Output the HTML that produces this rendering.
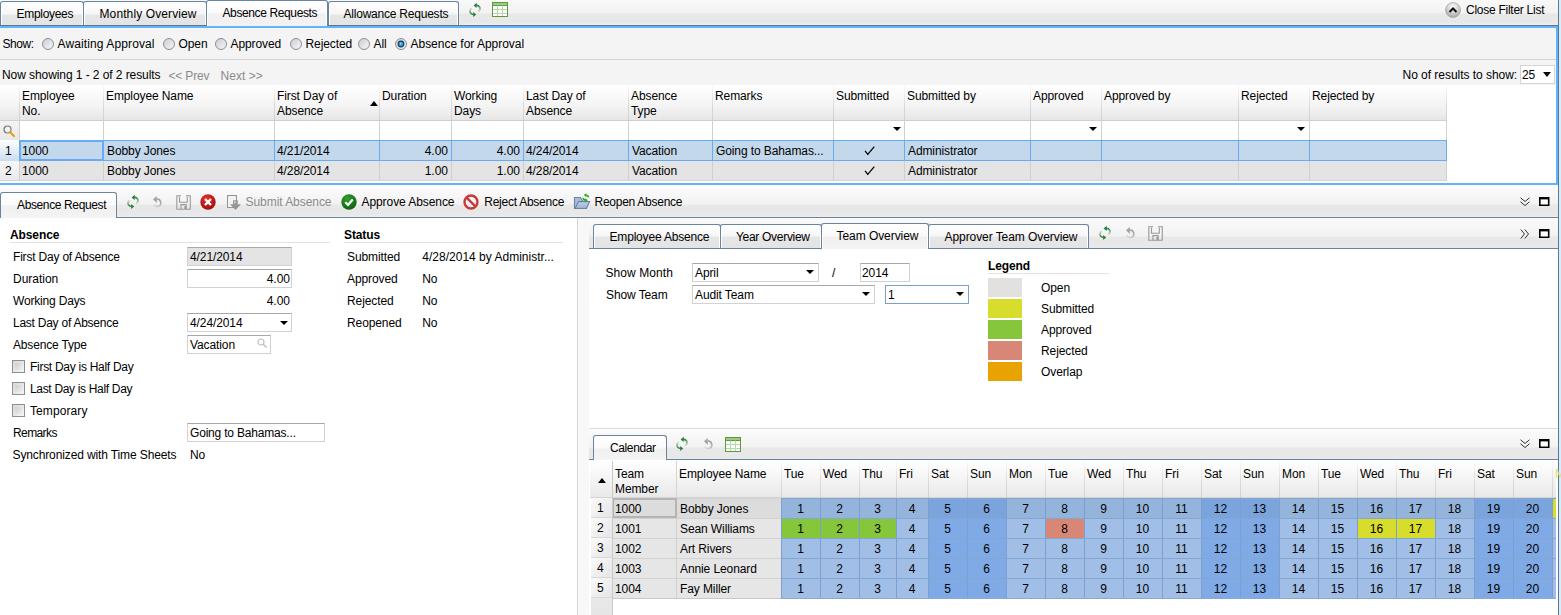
<!DOCTYPE html><html><head><meta charset='utf-8'><style>
*{margin:0;padding:0;box-sizing:border-box}
html,body{width:1561px;height:615px;overflow:hidden;background:#fff;position:relative}
.t{position:absolute;font:12px/14px 'Liberation Sans', sans-serif;color:#000;white-space:nowrap}
.bd{font-weight:bold}
.g{color:#8a8a8a}
.b{position:absolute}
svg{position:absolute;overflow:visible}
</style></head><body>
<div class="b" style="left:0px;top:0px;width:1558px;height:25px;background:linear-gradient(#f9f9f9 0px,#f2f2f2 13px,#e8e8e8 14px,#e8e8e8 23px,#f0eeec 24px)"></div>
<div class="b" style="left:0px;top:25px;width:1558px;height:1px;background:#5a7896"></div>
<div class="b" style="left:0px;top:26px;width:1556px;height:2px;background:#62b2fc"></div>
<div class="b" style="left:0px;top:1px;width:84px;height:24px;border:1px solid #6884a2;border-bottom:none;border-radius:3px 3px 0 0;background:linear-gradient(#ffffff 0px,#f6f6f6 12px,#e6e6e6 13px,#e4e4e4 100%);box-shadow:inset 1px 1px 0 #fff,inset -1px 0 0 #fff"></div>
<div class="t " style="left:16.5px;top:7px;letter-spacing:-0.295px;">Employees</div>
<div class="b" style="left:83px;top:1px;width:124px;height:24px;border:1px solid #6884a2;border-bottom:none;border-radius:3px 3px 0 0;background:linear-gradient(#ffffff 0px,#f6f6f6 12px,#e6e6e6 13px,#e4e4e4 100%);box-shadow:inset 1px 1px 0 #fff,inset -1px 0 0 #fff"></div>
<div class="t " style="left:99.5px;top:7px;letter-spacing:0.109px;">Monthly Overview</div>
<div class="b" style="left:328px;top:1px;width:131px;height:24px;border:1px solid #6884a2;border-bottom:none;border-radius:3px 3px 0 0;background:linear-gradient(#ffffff 0px,#f6f6f6 12px,#e6e6e6 13px,#e4e4e4 100%);box-shadow:inset 1px 1px 0 #fff,inset -1px 0 0 #fff"></div>
<div class="t " style="left:343.5px;top:7px;letter-spacing:-0.219px;">Allowance Requests</div>
<div class="b" style="left:206px;top:0px;width:122px;height:26px;border:1px solid #6884a2;border-bottom:none;border-radius:3px 3px 0 0;background:linear-gradient(#ffffff 0px,#fafafa 12px,#f0f0f0 13px,#f2f2f2 100%);box-shadow:inset 1px 1px 0 #fff,inset -1px 0 0 #fff"></div>
<div class="t " style="left:222.5px;top:6px;letter-spacing:-0.382px;">Absence Requests</div>
<svg style="left:469px;top:3px" width="12" height="14" viewBox="0 0 12 14">
<defs><linearGradient id="ru1" gradientUnits="userSpaceOnUse" x1="8" y1="2" x2="9" y2="9"><stop offset="0" stop-color="#2e7d3c"/><stop offset="1" stop-color="#2e7d3c" stop-opacity="0.15"/></linearGradient>
<linearGradient id="rl1" gradientUnits="userSpaceOnUse" x1="4" y1="11.5" x2="3" y2="5"><stop offset="0" stop-color="#2e7d3c"/><stop offset="1" stop-color="#2e7d3c" stop-opacity="0.15"/></linearGradient></defs>
<path d="M7 2.4 C10 2.4 11.2 4.2 11 6.2 C10.8 7.6 10 8.3 9 8.6" fill="none" stroke="url(#ru1)" stroke-width="1.8"/>
<path d="M5 11.4 C2 11.4 0.8 9.6 1 7.6 C1.2 6.2 2 5.5 3 5.2" fill="none" stroke="url(#rl1)" stroke-width="1.8"/>
<path d="M4.6 2.4 L7.8 -0.2 L7.6 5 Z" fill="#2e7d3c"/>
<path d="M7.2 11.4 L4.2 8.9 L4.2 14 Z" fill="#2e7d3c"/>
</svg>
<svg style="left:492px;top:2px" width="17" height="16" viewBox="0 0 17 16">
<rect x="0.5" y="0.5" width="15" height="14" fill="#fff" stroke="#5a9a3a" stroke-width="1"/>
<rect x="1" y="1" width="14" height="2" fill="#9ccc84"/>
<path d="M1 3.5H15" stroke="#5a9a3a" stroke-width="1"/>
<path d="M1 7.5H15M1 11.5H15M5.5 3.5V14M10.5 3.5V14" stroke="#b8d8a8" stroke-width="1"/>
</svg>
<svg style="left:1445px;top:2px" width="16" height="16" viewBox="0 0 16 16">
<defs><radialGradient id="cg" cx="0.5" cy="0.3" r="0.7"><stop offset="0" stop-color="#ffffff"/><stop offset="1" stop-color="#a8a8a8"/></radialGradient></defs>
<circle cx="8" cy="8" r="7.5" fill="url(#cg)" stroke="#9a9a9a" stroke-width="0.6"/>
<path d="M4.5 10 L8 6.5 L11.5 10" fill="none" stroke="#111" stroke-width="2"/>
</svg>
<div class="t " style="left:1466px;top:3px;letter-spacing:-0.262px;">Close Filter List</div>
<div class="b" style="left:1558px;top:0px;width:1px;height:615px;background:#5a7896"></div>
<div class="b" style="left:1559px;top:0px;width:2px;height:615px;background:#d4eefa"></div>
<div class="b" style="left:0px;top:28px;width:1556px;height:155px;background:#f4f4f4"></div>
<div class="b" style="left:1556px;top:26px;width:2px;height:159px;background:#62b2fc"></div>
<div class="b" style="left:0px;top:183px;width:1556px;height:2px;background:#62b2fc"></div>
<div class="t " style="left:2.5px;top:37px;letter-spacing:-0.438px;">Show:</div>
<svg style="left:42px;top:38px" width="12" height="12" viewBox="0 0 12 12">
<defs><linearGradient id="rg42" x1="0" y1="0" x2="1" y2="1"><stop offset="0" stop-color="#c8ccd4"/><stop offset="1" stop-color="#f8f8f8"/></linearGradient></defs>
<circle cx="6" cy="6" r="5.5" fill="url(#rg42)" stroke="#8e8f8f" stroke-width="1"/>
</svg>
<div class="t " style="left:57.5px;top:37px;letter-spacing:0.114px;">Awaiting Approval</div>
<svg style="left:163px;top:38px" width="12" height="12" viewBox="0 0 12 12">
<defs><linearGradient id="rg163" x1="0" y1="0" x2="1" y2="1"><stop offset="0" stop-color="#c8ccd4"/><stop offset="1" stop-color="#f8f8f8"/></linearGradient></defs>
<circle cx="6" cy="6" r="5.5" fill="url(#rg163)" stroke="#8e8f8f" stroke-width="1"/>
</svg>
<div class="t " style="left:178.5px;top:37px;letter-spacing:-0.1px;">Open</div>
<svg style="left:215px;top:38px" width="12" height="12" viewBox="0 0 12 12">
<defs><linearGradient id="rg215" x1="0" y1="0" x2="1" y2="1"><stop offset="0" stop-color="#c8ccd4"/><stop offset="1" stop-color="#f8f8f8"/></linearGradient></defs>
<circle cx="6" cy="6" r="5.5" fill="url(#rg215)" stroke="#8e8f8f" stroke-width="1"/>
</svg>
<div class="t " style="left:230.5px;top:37px;letter-spacing:-0.1px;">Approved</div>
<svg style="left:290px;top:38px" width="12" height="12" viewBox="0 0 12 12">
<defs><linearGradient id="rg290" x1="0" y1="0" x2="1" y2="1"><stop offset="0" stop-color="#c8ccd4"/><stop offset="1" stop-color="#f8f8f8"/></linearGradient></defs>
<circle cx="6" cy="6" r="5.5" fill="url(#rg290)" stroke="#8e8f8f" stroke-width="1"/>
</svg>
<div class="t " style="left:305.5px;top:37px;letter-spacing:-0.1px;">Rejected</div>
<svg style="left:358px;top:38px" width="12" height="12" viewBox="0 0 12 12">
<defs><linearGradient id="rg358" x1="0" y1="0" x2="1" y2="1"><stop offset="0" stop-color="#c8ccd4"/><stop offset="1" stop-color="#f8f8f8"/></linearGradient></defs>
<circle cx="6" cy="6" r="5.5" fill="url(#rg358)" stroke="#8e8f8f" stroke-width="1"/>
</svg>
<div class="t " style="left:373.5px;top:37px;letter-spacing:-0.1px;">All</div>
<svg style="left:395px;top:38px" width="12" height="12" viewBox="0 0 12 12">
<defs><linearGradient id="rg395" x1="0" y1="0" x2="1" y2="1"><stop offset="0" stop-color="#c8ccd4"/><stop offset="1" stop-color="#f8f8f8"/></linearGradient></defs>
<circle cx="6" cy="6" r="5.5" fill="url(#rg395)" stroke="#8e8f8f" stroke-width="1"/><circle cx="6" cy="6" r="3.4" fill="#163c5e"/><circle cx="6" cy="6" r="2.2" fill="#2f9ee0"/><circle cx="5.6" cy="5.5" r="1" fill="#8fd4ff"/>
</svg>
<div class="t " style="left:410.5px;top:37px;letter-spacing:-0.025px;">Absence for Approval</div>
<div class="b" style="left:0px;top:59px;width:1556px;height:1px;background:#d2d2d2"></div>
<div class="t " style="left:2px;top:68px;letter-spacing:-0.077px;">Now showing 1 - 2 of 2 results</div>
<div class="t g" style="left:168.5px;top:69px;letter-spacing:-0.171px;">&lt;&lt; Prev</div>
<div class="t g" style="left:220.5px;top:69px;letter-spacing:0.046px;">Next &gt;&gt;</div>
<div class="t " style="left:1402.5px;top:68px;letter-spacing:-0.033px;">No of results to show:</div>
<div class="b" style="left:1520px;top:65px;width:35px;height:19px;background:#fff;border:1px solid #d4d4d4"></div>
<div class="t " style="left:1522px;top:68px;letter-spacing:-0.1px;">25</div>
<svg style="left:1543px;top:72px" width="8" height="5" viewBox="0 0 8 5"><path d="M0 0H8L4.0 5Z" fill="#000"/></svg>
<div class="b" style="left:0px;top:85px;width:1447px;height:35px;background:linear-gradient(#ffffff,#f4f4f4 60%,#e6e6e6)"></div>
<div class="b" style="left:1447px;top:85px;width:109px;height:98px;background:#fff"></div>
<div class="b" style="left:0px;top:120px;width:1447px;height:1px;background:#d0d0d0"></div>
<div class="b" style="left:19px;top:121px;width:1428px;height:19px;background:#fff"></div>
<div class="b" style="left:0px;top:121px;width:19px;height:19px;background:linear-gradient(#f4f4f4,#e8e8e8)"></div>
<div class="b" style="left:0px;top:140px;width:19px;height:21px;background:linear-gradient(#ffffff,#c8dcf0)"></div>
<div class="b" style="left:19px;top:140px;width:1428px;height:21px;background:#c4d8ec"></div>
<div class="b" style="left:0px;top:161px;width:19px;height:20px;background:linear-gradient(#f8f8f8,#e8e8e8)"></div>
<div class="b" style="left:19px;top:161px;width:1428px;height:20px;background:#e4e4e4"></div>
<div class="b" style="left:0px;top:180px;width:1447px;height:1px;background:#d4d4d4"></div>
<div class="b" style="left:0px;top:181px;width:1556px;height:2px;background:#fff"></div>
<div class="b" style="left:19px;top:85px;width:1px;height:35px;background:linear-gradient(#fafafa,#d8d8d8 60%,#d0d0d0)"></div>
<div class="b" style="left:19px;top:121px;width:1px;height:60px;background:#d0d0d0"></div>
<div class="b" style="left:103px;top:85px;width:1px;height:35px;background:linear-gradient(#fafafa,#d8d8d8 60%,#d0d0d0)"></div>
<div class="b" style="left:103px;top:121px;width:1px;height:60px;background:#d0d0d0"></div>
<div class="b" style="left:274px;top:85px;width:1px;height:35px;background:linear-gradient(#fafafa,#d8d8d8 60%,#d0d0d0)"></div>
<div class="b" style="left:274px;top:121px;width:1px;height:60px;background:#d0d0d0"></div>
<div class="b" style="left:379px;top:85px;width:1px;height:35px;background:linear-gradient(#fafafa,#d8d8d8 60%,#d0d0d0)"></div>
<div class="b" style="left:379px;top:121px;width:1px;height:60px;background:#d0d0d0"></div>
<div class="b" style="left:451px;top:85px;width:1px;height:35px;background:linear-gradient(#fafafa,#d8d8d8 60%,#d0d0d0)"></div>
<div class="b" style="left:451px;top:121px;width:1px;height:60px;background:#d0d0d0"></div>
<div class="b" style="left:523px;top:85px;width:1px;height:35px;background:linear-gradient(#fafafa,#d8d8d8 60%,#d0d0d0)"></div>
<div class="b" style="left:523px;top:121px;width:1px;height:60px;background:#d0d0d0"></div>
<div class="b" style="left:628px;top:85px;width:1px;height:35px;background:linear-gradient(#fafafa,#d8d8d8 60%,#d0d0d0)"></div>
<div class="b" style="left:628px;top:121px;width:1px;height:60px;background:#d0d0d0"></div>
<div class="b" style="left:712px;top:85px;width:1px;height:35px;background:linear-gradient(#fafafa,#d8d8d8 60%,#d0d0d0)"></div>
<div class="b" style="left:712px;top:121px;width:1px;height:60px;background:#d0d0d0"></div>
<div class="b" style="left:833px;top:85px;width:1px;height:35px;background:linear-gradient(#fafafa,#d8d8d8 60%,#d0d0d0)"></div>
<div class="b" style="left:833px;top:121px;width:1px;height:60px;background:#d0d0d0"></div>
<div class="b" style="left:904px;top:85px;width:1px;height:35px;background:linear-gradient(#fafafa,#d8d8d8 60%,#d0d0d0)"></div>
<div class="b" style="left:904px;top:121px;width:1px;height:60px;background:#d0d0d0"></div>
<div class="b" style="left:1030px;top:85px;width:1px;height:35px;background:linear-gradient(#fafafa,#d8d8d8 60%,#d0d0d0)"></div>
<div class="b" style="left:1030px;top:121px;width:1px;height:60px;background:#d0d0d0"></div>
<div class="b" style="left:1101px;top:85px;width:1px;height:35px;background:linear-gradient(#fafafa,#d8d8d8 60%,#d0d0d0)"></div>
<div class="b" style="left:1101px;top:121px;width:1px;height:60px;background:#d0d0d0"></div>
<div class="b" style="left:1238px;top:85px;width:1px;height:35px;background:linear-gradient(#fafafa,#d8d8d8 60%,#d0d0d0)"></div>
<div class="b" style="left:1238px;top:121px;width:1px;height:60px;background:#d0d0d0"></div>
<div class="b" style="left:1309px;top:85px;width:1px;height:35px;background:linear-gradient(#fafafa,#d8d8d8 60%,#d0d0d0)"></div>
<div class="b" style="left:1309px;top:121px;width:1px;height:60px;background:#d0d0d0"></div>
<div class="b" style="left:1446px;top:85px;width:1px;height:35px;background:linear-gradient(#fafafa,#d8d8d8 60%,#d0d0d0)"></div>
<div class="b" style="left:1446px;top:121px;width:1px;height:60px;background:#d0d0d0"></div>
<div class="b" style="left:19px;top:140px;width:1428px;height:1px;background:#64acf4"></div>
<div class="b" style="left:19px;top:160px;width:1428px;height:1px;background:#64acf4"></div>
<div class="b" style="left:103px;top:140px;width:1px;height:21px;background:#64acf4"></div>
<div class="b" style="left:274px;top:140px;width:1px;height:21px;background:#64acf4"></div>
<div class="b" style="left:379px;top:140px;width:1px;height:21px;background:#64acf4"></div>
<div class="b" style="left:451px;top:140px;width:1px;height:21px;background:#64acf4"></div>
<div class="b" style="left:523px;top:140px;width:1px;height:21px;background:#64acf4"></div>
<div class="b" style="left:628px;top:140px;width:1px;height:21px;background:#64acf4"></div>
<div class="b" style="left:712px;top:140px;width:1px;height:21px;background:#64acf4"></div>
<div class="b" style="left:833px;top:140px;width:1px;height:21px;background:#64acf4"></div>
<div class="b" style="left:904px;top:140px;width:1px;height:21px;background:#64acf4"></div>
<div class="b" style="left:1030px;top:140px;width:1px;height:21px;background:#64acf4"></div>
<div class="b" style="left:1101px;top:140px;width:1px;height:21px;background:#64acf4"></div>
<div class="b" style="left:1238px;top:140px;width:1px;height:21px;background:#64acf4"></div>
<div class="b" style="left:1309px;top:140px;width:1px;height:21px;background:#64acf4"></div>
<div class="b" style="left:1446px;top:140px;width:1px;height:21px;background:#64acf4"></div>
<div class="b" style="left:19px;top:140px;width:85px;height:21px;border:2px solid #64acf4"></div>
<div class="t " style="left:22px;top:89px;letter-spacing:-0.1px;">Employee</div>
<div class="t " style="left:22px;top:104px;letter-spacing:-0.1px;">No.</div>
<div class="t " style="left:106px;top:89px;letter-spacing:-0.1px;">Employee Name</div>
<div class="t " style="left:277px;top:89px;letter-spacing:-0.1px;">First Day of</div>
<div class="t " style="left:277px;top:104px;letter-spacing:-0.1px;">Absence</div>
<div class="t " style="left:382px;top:89px;letter-spacing:-0.1px;">Duration</div>
<div class="t " style="left:454px;top:89px;letter-spacing:-0.1px;">Working</div>
<div class="t " style="left:454px;top:104px;letter-spacing:-0.1px;">Days</div>
<div class="t " style="left:526px;top:89px;letter-spacing:-0.1px;">Last Day of</div>
<div class="t " style="left:526px;top:104px;letter-spacing:-0.1px;">Absence</div>
<div class="t " style="left:631px;top:89px;letter-spacing:-0.1px;">Absence</div>
<div class="t " style="left:631px;top:104px;letter-spacing:-0.1px;">Type</div>
<div class="t " style="left:715px;top:89px;letter-spacing:-0.1px;">Remarks</div>
<div class="t " style="left:836px;top:89px;letter-spacing:-0.1px;">Submitted</div>
<div class="t " style="left:907px;top:89px;letter-spacing:-0.1px;">Submitted by</div>
<div class="t " style="left:1033px;top:89px;letter-spacing:-0.1px;">Approved</div>
<div class="t " style="left:1104px;top:89px;letter-spacing:-0.1px;">Approved by</div>
<div class="t " style="left:1241px;top:89px;letter-spacing:-0.1px;">Rejected</div>
<div class="t " style="left:1312px;top:89px;letter-spacing:-0.1px;">Rejected by</div>
<svg style="left:370px;top:101px" width="8" height="5" viewBox="0 0 8 5"><path d="M0 5H8L4.0 0Z" fill="#000"/></svg>
<svg style="left:3px;top:125px" width="12" height="12" viewBox="0 0 12 12">
<circle cx="4.5" cy="4.5" r="3.5" fill="#f4f4f4" stroke="#777" stroke-width="1.2"/>
<path d="M7 7 L11 11" stroke="#e0a020" stroke-width="2.2" stroke-linecap="round"/>
</svg>
<svg style="left:893px;top:127px" width="8" height="4" viewBox="0 0 8 4"><path d="M0 0H8L4.0 4Z" fill="#000"/></svg>
<svg style="left:1089px;top:127px" width="8" height="4" viewBox="0 0 8 4"><path d="M0 0H8L4.0 4Z" fill="#000"/></svg>
<svg style="left:1297px;top:127px" width="8" height="4" viewBox="0 0 8 4"><path d="M0 0H8L4.0 4Z" fill="#000"/></svg>
<div class="t " style="left:5px;top:144px;letter-spacing:-0.1px;">1</div>
<div class="t " style="left:22px;top:144px;letter-spacing:-0.1px;">1000</div>
<div class="t " style="left:107px;top:144px;letter-spacing:-0.1px;">Bobby Jones</div>
<div class="t " style="left:277px;top:144px;letter-spacing:-0.1px;">4/21/2014</div>
<div class="t " style="right:1113px;top:144px;">4.00</div>
<div class="t " style="right:1041px;top:144px;">4.00</div>
<div class="t " style="left:526px;top:144px;letter-spacing:-0.1px;">4/24/2014</div>
<div class="t " style="left:632px;top:144px;letter-spacing:-0.1px;">Vacation</div>
<div class="t " style="left:716px;top:144px;letter-spacing:-0.1px;">Going to Bahamas...</div>
<svg style="left:864px;top:146px" width="11" height="10" viewBox="0 0 11 10"><path d="M1 4.8 L3.8 8.3 L10.3 0.6" fill="none" stroke="#000" stroke-width="1.3"/><path d="M3.2 8.5 L4.6 8.2 L3.7 7" fill="#000"/></svg>
<div class="t " style="left:908px;top:144px;letter-spacing:-0.1px;">Administrator</div>
<div class="t " style="left:5px;top:164px;letter-spacing:-0.1px;">2</div>
<div class="t " style="left:22px;top:164px;letter-spacing:-0.1px;">1000</div>
<div class="t " style="left:107px;top:164px;letter-spacing:-0.1px;">Bobby Jones</div>
<div class="t " style="left:277px;top:164px;letter-spacing:-0.1px;">4/28/2014</div>
<div class="t " style="right:1113px;top:164px;">1.00</div>
<div class="t " style="right:1041px;top:164px;">1.00</div>
<div class="t " style="left:526px;top:164px;letter-spacing:-0.1px;">4/28/2014</div>
<div class="t " style="left:632px;top:164px;letter-spacing:-0.1px;">Vacation</div>
<svg style="left:864px;top:166px" width="11" height="10" viewBox="0 0 11 10"><path d="M1 4.8 L3.8 8.3 L10.3 0.6" fill="none" stroke="#000" stroke-width="1.3"/><path d="M3.2 8.5 L4.6 8.2 L3.7 7" fill="#000"/></svg>
<div class="t " style="left:908px;top:164px;letter-spacing:-0.1px;">Administrator</div>
<div class="b" style="left:0px;top:185px;width:1558px;height:32px;background:linear-gradient(#fcfcfc 0px,#f9f9f9 6px,#f2f2f2 19px,#e8e8e8 20px,#e8e8e8 30px,#efedeb 31px)"></div>
<div class="b" style="left:0px;top:217px;width:1558px;height:1px;background:#6884a2"></div>
<div class="b" style="left:0px;top:192px;width:117px;height:26px;border:1px solid #6884a2;border-bottom:none;border-radius:3px 3px 0 0;background:linear-gradient(#ffffff 0px,#fafafa 12px,#f0f0f0 13px,#f4f4f4 100%)"></div>
<div class="t " style="left:17px;top:198px;letter-spacing:-0.373px;">Absence Request</div>
<svg style="left:127px;top:195px" width="12" height="14" viewBox="0 0 12 14">
<defs><linearGradient id="ru2" gradientUnits="userSpaceOnUse" x1="8" y1="2" x2="9" y2="9"><stop offset="0" stop-color="#2e7d3c"/><stop offset="1" stop-color="#2e7d3c" stop-opacity="0.15"/></linearGradient>
<linearGradient id="rl2" gradientUnits="userSpaceOnUse" x1="4" y1="11.5" x2="3" y2="5"><stop offset="0" stop-color="#2e7d3c"/><stop offset="1" stop-color="#2e7d3c" stop-opacity="0.15"/></linearGradient></defs>
<path d="M7 2.4 C10 2.4 11.2 4.2 11 6.2 C10.8 7.6 10 8.3 9 8.6" fill="none" stroke="url(#ru2)" stroke-width="1.8"/>
<path d="M5 11.4 C2 11.4 0.8 9.6 1 7.6 C1.2 6.2 2 5.5 3 5.2" fill="none" stroke="url(#rl2)" stroke-width="1.8"/>
<path d="M4.6 2.4 L7.8 -0.2 L7.6 5 Z" fill="#2e7d3c"/>
<path d="M7.2 11.4 L4.2 8.9 L4.2 14 Z" fill="#2e7d3c"/>
</svg>
<svg style="left:152px;top:196px" width="11" height="13" viewBox="0 0 11 13">
<defs><linearGradient id="ug1" gradientUnits="userSpaceOnUse" x1="8" y1="4" x2="2" y2="10"><stop offset="0" stop-color="#a2a2a2"/><stop offset="1" stop-color="#a2a2a2" stop-opacity="0.2"/></linearGradient></defs>
<path d="M4.6 3.2 A3.7 3.7 0 1 1 1.8 8.6" fill="none" stroke="url(#ug1)" stroke-width="1.6"/>
<path d="M1 3.3 L4.8 -0.1 L4.8 6.9 Z" fill="#a2a2a2"/>
</svg>
<svg style="left:176px;top:195px" width="15" height="15" viewBox="0 0 15 15">
<path d="M5 0.8H0.8V14.3H14.3V0.8H10" fill="none" stroke="#999999" stroke-width="1.1"/>
<path d="M3.5 1.5V7.3H11.3V1.5" fill="none" stroke="#999999" stroke-width="1.1"/>
<path d="M4.9 14.3V9.6H10.2V14.3" fill="none" stroke="#999999" stroke-width="1.1"/>
<rect x="8.4" y="11" width="1.8" height="3" fill="#999999"/>
</svg>
<svg style="left:200px;top:194px" width="16" height="16" viewBox="0 0 16 16">
<defs><radialGradient id="xr" cx="0.4" cy="0.3" r="0.8"><stop offset="0" stop-color="#e83030"/><stop offset="1" stop-color="#9a0808"/></radialGradient></defs>
<circle cx="8" cy="8" r="7.7" fill="url(#xr)"/>
<path d="M5 5L11 11M11 5L5 11" stroke="#fff" stroke-width="2.4"/>
</svg>
<svg style="left:222px;top:190px" width="24" height="24" viewBox="0 0 24 24">
<rect x="5.5" y="5.5" width="9" height="12" fill="#f2f2f2" stroke="#959595" stroke-width="1"/>
<rect x="11" y="10.3" width="4.8" height="4.2" fill="#959595"/>
<rect x="12.2" y="11.5" width="1.4" height="1.6" fill="#f0f0f0"/>
<path d="M8 14.2 H19 L13.5 20 Z" fill="#959595"/>
</svg>
<div class="t g" style="left:245.5px;top:195px;letter-spacing:-0.055px;">Submit Absence</div>
<svg style="left:341px;top:194px" width="16" height="16" viewBox="0 0 16 16">
<defs><radialGradient id="ok" cx="0.4" cy="0.3" r="0.8"><stop offset="0" stop-color="#30a030"/><stop offset="1" stop-color="#0a5a0a"/></radialGradient></defs>
<circle cx="8" cy="8" r="7.7" fill="url(#ok)"/>
<path d="M4.3 8.2L7 10.8L11.8 5.5" fill="none" stroke="#fff" stroke-width="2.2"/>
</svg>
<div class="t " style="left:361.5px;top:195px;letter-spacing:-0.076px;">Approve Absence</div>
<svg style="left:463px;top:194px" width="16" height="16" viewBox="0 0 16 16">
<circle cx="8" cy="8" r="6.5" fill="none" stroke="#c83a3a" stroke-width="2.4"/>
<path d="M3.6 3.6L12.4 12.4" stroke="#c83a3a" stroke-width="2.4"/>
</svg>
<div class="t " style="left:484.3px;top:195px;letter-spacing:-0.260px;">Reject Absence</div>
<svg style="left:570px;top:190px" width="24" height="24" viewBox="0 0 24 24">
<defs><linearGradient id="fd" x1="0" y1="0" x2="0" y2="1"><stop offset="0" stop-color="#c4d4e8"/><stop offset="1" stop-color="#98b0cc"/></linearGradient></defs>
<path d="M4.5 18.5 V7.5 H10.3 L12.8 11.2 H16.5 V18.5 Z" fill="#a8bcd6" stroke="#6a84a4" stroke-width="1.1"/>
<path d="M5 18.5 L8.6 11.6 H19.6 L16.4 18.5 Z" fill="url(#fd)" stroke="#6a84a4" stroke-width="1.1"/>
<path d="M15.5 5.2 C17.5 5.2 18.6 6.2 18.4 7.4" fill="none" stroke="#22aa22" stroke-width="1.6"/>
<path d="M13.8 5 L16.4 3.2 L16.2 7 Z" fill="#22aa22"/>
<path d="M16 10 C14 10 13 9 13.2 7.8" fill="none" stroke="#22aa22" stroke-width="1.6"/>
<path d="M17.8 10.2 L15.2 12 L15.4 8.2 Z" fill="#22aa22"/>
</svg>
<div class="t " style="left:594.5px;top:195px;letter-spacing:-0.262px;">Reopen Absence</div>
<svg style="left:1520px;top:197px" width="10" height="10" viewBox="0 0 10 10">
<path d="M0.5 0.8L5 4.5L9.5 0.8M0.5 4.8L5 8.5L9.5 4.8" fill="none" stroke="#333" stroke-width="1"/></svg>
<svg style="left:1539px;top:197px" width="11" height="10" viewBox="0 0 11 10">
<rect x="0" y="0" width="10.5" height="9" fill="#000"/>
<rect x="1.6" y="2.4" width="7.3" height="5.1" fill="#fff"/></svg>
<div class="b" style="left:0px;top:218px;width:577px;height:397px;background:#fff"></div>
<div class="b" style="left:577px;top:218px;width:1px;height:397px;background:#d6d6d6"></div>
<div class="b" style="left:578px;top:218px;width:11px;height:397px;background:#f8f8f8"></div>
<div class="t bd" style="left:10px;top:228px;letter-spacing:-0.1px;">Absence</div>
<div class="b" style="left:10px;top:242px;width:320px;height:1px;background:#e2e2e2"></div>
<div class="t bd" style="left:344px;top:228px;letter-spacing:-0.1px;">Status</div>
<div class="b" style="left:344px;top:242px;width:219px;height:1px;background:#e2e2e2"></div>
<div class="t " style="left:13px;top:250px;letter-spacing:-0.195px;">First Day of Absence</div>
<div class="t " style="left:13px;top:272px;letter-spacing:-0.022px;">Duration</div>
<div class="t " style="left:13px;top:294px;letter-spacing:-0.179px;">Working Days</div>
<div class="t " style="left:13px;top:316px;letter-spacing:-0.248px;">Last Day of Absence</div>
<div class="t " style="left:13px;top:338px;letter-spacing:-0.166px;">Absence Type</div>
<div class="b" style="left:187px;top:247px;width:105px;height:19px;background:#e4e4e4;border:1px solid #d2d2d6;border-top-color:#a8a8a8"></div>
<div class="t " style="left:190px;top:250px;letter-spacing:-0.1px;">4/21/2014</div>
<div class="b" style="left:187px;top:269px;width:105px;height:19px;background:#fff;border:1px solid #d2d2d6;border-top-color:#a8a8a8"></div>
<div class="t " style="right:1271px;top:272px;">4.00</div>
<div class="t " style="right:1271px;top:294px;">4.00</div>
<div class="b" style="left:187px;top:313px;width:105px;height:19px;background:#fff;border:1px solid #d2d2d6;border-top-color:#a8a8a8"></div>
<div class="t " style="left:190px;top:316px;letter-spacing:-0.1px;">4/24/2014</div>
<svg style="left:280px;top:321px" width="8" height="4" viewBox="0 0 8 4"><path d="M0 0H8L4.0 4Z" fill="#000"/></svg>
<div class="b" style="left:187px;top:335px;width:84px;height:19px;background:#fff;border:1px solid #d2d2d6;border-top-color:#a8a8a8"></div>
<div class="t " style="left:190px;top:338px;letter-spacing:-0.1px;">Vacation</div>
<svg style="left:257px;top:338px" width="10" height="10" viewBox="0 0 10 10">
<circle cx="4" cy="4" r="3" fill="none" stroke="#c0c0c0" stroke-width="1.2"/><path d="M6.2 6.2L9.5 9.5" stroke="#c0c0c0" stroke-width="1.6"/></svg>
<div class="b" style="left:12px;top:360px;width:13px;height:13px;border:1px solid #8e8f8f;background:linear-gradient(135deg,#d8d8d8,#f6f6f6)"><div style="position:absolute;left:2px;top:2px;width:7px;height:7px;background:linear-gradient(135deg,#cfcfcf,#eeeeee)"></div></div>
<div class="t " style="left:30px;top:360px;letter-spacing:-0.282px;">First Day is Half Day</div>
<div class="b" style="left:12px;top:382px;width:13px;height:13px;border:1px solid #8e8f8f;background:linear-gradient(135deg,#d8d8d8,#f6f6f6)"><div style="position:absolute;left:2px;top:2px;width:7px;height:7px;background:linear-gradient(135deg,#cfcfcf,#eeeeee)"></div></div>
<div class="t " style="left:30px;top:382px;letter-spacing:-0.326px;">Last Day is Half Day</div>
<div class="b" style="left:12px;top:404px;width:13px;height:13px;border:1px solid #8e8f8f;background:linear-gradient(135deg,#d8d8d8,#f6f6f6)"><div style="position:absolute;left:2px;top:2px;width:7px;height:7px;background:linear-gradient(135deg,#cfcfcf,#eeeeee)"></div></div>
<div class="t " style="left:30px;top:404px;letter-spacing:0.089px;">Temporary</div>
<div class="t " style="left:13px;top:426px;letter-spacing:-0.601px;">Remarks</div>
<div class="b" style="left:187px;top:423px;width:138px;height:19px;background:#fff;border:1px solid #d2d2d6;border-top-color:#a8a8a8"></div>
<div class="t " style="left:190px;top:426px;letter-spacing:-0.189px;">Going to Bahamas...</div>
<div class="t " style="left:12.5px;top:448px;letter-spacing:-0.122px;">Synchronized with Time Sheets</div>
<div class="t " style="left:190px;top:448px;letter-spacing:-0.1px;">No</div>
<div class="t " style="left:347px;top:250px;letter-spacing:-0.1px;">Submitted</div>
<div class="t " style="left:422.3px;top:250px;letter-spacing:0.008px;">4/28/2014 by Administr...</div>
<div class="t " style="left:347px;top:272px;letter-spacing:-0.1px;">Approved</div>
<div class="t " style="left:422.3px;top:272px;letter-spacing:-0.1px;">No</div>
<div class="t " style="left:347px;top:294px;letter-spacing:-0.1px;">Rejected</div>
<div class="t " style="left:422.3px;top:294px;letter-spacing:-0.1px;">No</div>
<div class="t " style="left:347px;top:316px;letter-spacing:-0.1px;">Reopened</div>
<div class="t " style="left:422.3px;top:316px;letter-spacing:-0.1px;">No</div>
<div class="b" style="left:589px;top:218px;width:969px;height:397px;background:#fff"></div>
<div class="b" style="left:589px;top:218px;width:969px;height:31px;background:linear-gradient(#fbfbfb 0px,#f8f8f8 6px,#f2f2f2 18px,#e8e8e8 19px,#e8e8e8 29px,#efedeb 30px)"></div>
<div class="b" style="left:589px;top:248px;width:969px;height:1px;background:#6884a2"></div>
<div class="b" style="left:593px;top:224px;width:128px;height:24px;border:1px solid #6884a2;border-bottom:none;border-radius:3px 3px 0 0;background:linear-gradient(#ffffff 0px,#f6f6f6 11px,#e6e6e6 12px,#e4e4e4 100%);box-shadow:inset 1px 1px 0 #fff,inset -1px 0 0 #fff"></div>
<div class="t " style="left:609.5px;top:230px;letter-spacing:-0.182px;">Employee Absence</div>
<div class="b" style="left:720px;top:224px;width:102px;height:24px;border:1px solid #6884a2;border-bottom:none;border-radius:3px 3px 0 0;background:linear-gradient(#ffffff 0px,#f6f6f6 11px,#e6e6e6 12px,#e4e4e4 100%);box-shadow:inset 1px 1px 0 #fff,inset -1px 0 0 #fff"></div>
<div class="t " style="left:736px;top:230px;letter-spacing:-0.299px;">Year Overview</div>
<div class="b" style="left:928px;top:224px;width:161px;height:24px;border:1px solid #6884a2;border-bottom:none;border-radius:3px 3px 0 0;background:linear-gradient(#ffffff 0px,#f6f6f6 11px,#e6e6e6 12px,#e4e4e4 100%);box-shadow:inset 1px 1px 0 #fff,inset -1px 0 0 #fff"></div>
<div class="t " style="left:944.5px;top:230px;letter-spacing:-0.071px;">Approver Team Overview</div>
<div class="b" style="left:821px;top:223px;width:108px;height:26px;border:1px solid #6884a2;border-bottom:none;border-radius:3px 3px 0 0;background:linear-gradient(#ffffff 0px,#fafafa 12px,#f0f0f0 13px,#f4f4f4 100%);box-shadow:inset 1px 1px 0 #fff,inset -1px 0 0 #fff"></div>
<div class="t " style="left:836.5px;top:229px;letter-spacing:-0.057px;">Team Overview</div>
<svg style="left:1099px;top:226px" width="12" height="14" viewBox="0 0 12 14">
<defs><linearGradient id="ru3" gradientUnits="userSpaceOnUse" x1="8" y1="2" x2="9" y2="9"><stop offset="0" stop-color="#2e7d3c"/><stop offset="1" stop-color="#2e7d3c" stop-opacity="0.15"/></linearGradient>
<linearGradient id="rl3" gradientUnits="userSpaceOnUse" x1="4" y1="11.5" x2="3" y2="5"><stop offset="0" stop-color="#2e7d3c"/><stop offset="1" stop-color="#2e7d3c" stop-opacity="0.15"/></linearGradient></defs>
<path d="M7 2.4 C10 2.4 11.2 4.2 11 6.2 C10.8 7.6 10 8.3 9 8.6" fill="none" stroke="url(#ru3)" stroke-width="1.8"/>
<path d="M5 11.4 C2 11.4 0.8 9.6 1 7.6 C1.2 6.2 2 5.5 3 5.2" fill="none" stroke="url(#rl3)" stroke-width="1.8"/>
<path d="M4.6 2.4 L7.8 -0.2 L7.6 5 Z" fill="#2e7d3c"/>
<path d="M7.2 11.4 L4.2 8.9 L4.2 14 Z" fill="#2e7d3c"/>
</svg>
<svg style="left:1125px;top:227px" width="11" height="13" viewBox="0 0 11 13">
<defs><linearGradient id="ug2" gradientUnits="userSpaceOnUse" x1="8" y1="4" x2="2" y2="10"><stop offset="0" stop-color="#a2a2a2"/><stop offset="1" stop-color="#a2a2a2" stop-opacity="0.2"/></linearGradient></defs>
<path d="M4.6 3.2 A3.7 3.7 0 1 1 1.8 8.6" fill="none" stroke="url(#ug2)" stroke-width="1.6"/>
<path d="M1 3.3 L4.8 -0.1 L4.8 6.9 Z" fill="#a2a2a2"/>
</svg>
<svg style="left:1148px;top:226px" width="15" height="15" viewBox="0 0 15 15">
<path d="M5 0.8H0.8V14.3H14.3V0.8H10" fill="none" stroke="#999999" stroke-width="1.1"/>
<path d="M3.5 1.5V7.3H11.3V1.5" fill="none" stroke="#999999" stroke-width="1.1"/>
<path d="M4.9 14.3V9.6H10.2V14.3" fill="none" stroke="#999999" stroke-width="1.1"/>
<rect x="8.4" y="11" width="1.8" height="3" fill="#999999"/>
</svg>
<svg style="left:1520px;top:229px" width="10" height="10" viewBox="0 0 10 10">
<path d="M0.8 0.5L4.5 5L0.8 9.5M4.8 0.5L8.5 5L4.8 9.5" fill="none" stroke="#333" stroke-width="1"/></svg>
<svg style="left:1539px;top:229px" width="11" height="10" viewBox="0 0 11 10">
<rect x="0" y="0" width="10.5" height="9" fill="#000"/>
<rect x="1.6" y="2.4" width="7.3" height="5.1" fill="#fff"/></svg>
<div class="t " style="left:605.5px;top:266px;letter-spacing:0.077px;">Show Month</div>
<div class="t " style="left:606px;top:288px;letter-spacing:-0.1px;">Show Team</div>
<div class="b" style="left:692px;top:263px;width:127px;height:19px;background:#fff;border:1px solid #d2d2d6;border-top-color:#a8a8a8"></div>
<div class="t " style="left:695px;top:266px;letter-spacing:-0.1px;">April</div>
<svg style="left:806px;top:270px" width="8" height="4" viewBox="0 0 8 4"><path d="M0 0H8L4.0 4Z" fill="#000"/></svg>
<div class="t " style="left:832px;top:266px;letter-spacing:-0.1px;">/</div>
<div class="b" style="left:860px;top:263px;width:50px;height:19px;background:#fff;border:1px solid #d2d2d6;border-top-color:#a8a8a8"></div>
<div class="t " style="left:862px;top:266px;letter-spacing:-0.1px;">2014</div>
<div class="b" style="left:692px;top:285px;width:183px;height:19px;background:#fff;border:1px solid #d2d2d6;border-top-color:#a8a8a8"></div>
<div class="t " style="left:695px;top:288px;letter-spacing:-0.1px;">Audit Team</div>
<svg style="left:862px;top:292px" width="8" height="4" viewBox="0 0 8 4"><path d="M0 0H8L4.0 4Z" fill="#000"/></svg>
<div class="b" style="left:885px;top:285px;width:84px;height:19px;background:#fff;border:1px solid #7aa0cc"></div>
<div class="t " style="left:888px;top:288px;letter-spacing:-0.1px;">1</div>
<svg style="left:956px;top:292px" width="8" height="4" viewBox="0 0 8 4"><path d="M0 0H8L4.0 4Z" fill="#000"/></svg>
<div class="t bd" style="left:988px;top:259px;letter-spacing:-0.1px;">Legend</div>
<div class="b" style="left:988px;top:273px;width:121px;height:1px;background:#e2e2e2"></div>
<div class="b" style="left:988px;top:278px;width:34px;height:19px;background:#e2e1df"></div>
<div class="t " style="left:1041px;top:281px;letter-spacing:-0.1px;">Open</div>
<div class="b" style="left:988px;top:299px;width:34px;height:19px;background:#d8dc2c"></div>
<div class="t " style="left:1041px;top:302px;letter-spacing:-0.1px;">Submitted</div>
<div class="b" style="left:988px;top:320px;width:34px;height:19px;background:#86c63a"></div>
<div class="t " style="left:1041px;top:323px;letter-spacing:-0.1px;">Approved</div>
<div class="b" style="left:988px;top:341px;width:34px;height:19px;background:#d88676"></div>
<div class="t " style="left:1041px;top:344px;letter-spacing:-0.1px;">Rejected</div>
<div class="b" style="left:988px;top:362px;width:34px;height:19px;background:#e8a202"></div>
<div class="t " style="left:1041px;top:365px;letter-spacing:-0.1px;">Overlap</div>
<div class="b" style="left:589px;top:428px;width:969px;height:1px;background:#dcdcdc"></div>
<div class="b" style="left:589px;top:429px;width:969px;height:31px;background:linear-gradient(#fbfbfb 0px,#f8f8f8 6px,#f2f2f2 18px,#e8e8e8 19px,#e8e8e8 29px,#efedeb 30px)"></div>
<div class="b" style="left:589px;top:459px;width:969px;height:1px;background:#6884a2"></div>
<div class="b" style="left:593px;top:435px;width:74px;height:25px;border:1px solid #6884a2;border-bottom:none;border-radius:3px 3px 0 0;background:linear-gradient(#ffffff 0px,#fafafa 12px,#f0f0f0 13px,#f4f4f4 100%)"></div>
<div class="t " style="left:610px;top:441px;letter-spacing:-0.385px;">Calendar</div>
<svg style="left:676px;top:437px" width="12" height="14" viewBox="0 0 12 14">
<defs><linearGradient id="ru4" gradientUnits="userSpaceOnUse" x1="8" y1="2" x2="9" y2="9"><stop offset="0" stop-color="#2e7d3c"/><stop offset="1" stop-color="#2e7d3c" stop-opacity="0.15"/></linearGradient>
<linearGradient id="rl4" gradientUnits="userSpaceOnUse" x1="4" y1="11.5" x2="3" y2="5"><stop offset="0" stop-color="#2e7d3c"/><stop offset="1" stop-color="#2e7d3c" stop-opacity="0.15"/></linearGradient></defs>
<path d="M7 2.4 C10 2.4 11.2 4.2 11 6.2 C10.8 7.6 10 8.3 9 8.6" fill="none" stroke="url(#ru4)" stroke-width="1.8"/>
<path d="M5 11.4 C2 11.4 0.8 9.6 1 7.6 C1.2 6.2 2 5.5 3 5.2" fill="none" stroke="url(#rl4)" stroke-width="1.8"/>
<path d="M4.6 2.4 L7.8 -0.2 L7.6 5 Z" fill="#2e7d3c"/>
<path d="M7.2 11.4 L4.2 8.9 L4.2 14 Z" fill="#2e7d3c"/>
</svg>
<svg style="left:703px;top:438px" width="11" height="13" viewBox="0 0 11 13">
<defs><linearGradient id="ug3" gradientUnits="userSpaceOnUse" x1="8" y1="4" x2="2" y2="10"><stop offset="0" stop-color="#a2a2a2"/><stop offset="1" stop-color="#a2a2a2" stop-opacity="0.2"/></linearGradient></defs>
<path d="M4.6 3.2 A3.7 3.7 0 1 1 1.8 8.6" fill="none" stroke="url(#ug3)" stroke-width="1.6"/>
<path d="M1 3.3 L4.8 -0.1 L4.8 6.9 Z" fill="#a2a2a2"/>
</svg>
<svg style="left:725px;top:437px" width="17" height="16" viewBox="0 0 17 16">
<rect x="0.5" y="0.5" width="15" height="14" fill="#fff" stroke="#5a9a3a" stroke-width="1"/>
<rect x="1" y="1" width="14" height="2" fill="#9ccc84"/>
<path d="M1 3.5H15" stroke="#5a9a3a" stroke-width="1"/>
<path d="M1 7.5H15M1 11.5H15M5.5 3.5V14M10.5 3.5V14" stroke="#b8d8a8" stroke-width="1"/>
</svg>
<svg style="left:1520px;top:439px" width="10" height="10" viewBox="0 0 10 10">
<path d="M0.5 0.8L5 4.5L9.5 0.8M0.5 4.8L5 8.5L9.5 4.8" fill="none" stroke="#333" stroke-width="1"/></svg>
<svg style="left:1539px;top:439px" width="11" height="10" viewBox="0 0 11 10">
<rect x="0" y="0" width="10.5" height="9" fill="#000"/>
<rect x="1.6" y="2.4" width="7.3" height="5.1" fill="#fff"/></svg>
<div class="b" style="left:589px;top:460px;width:969px;height:1px;background:#fff"></div>
<div class="b" style="left:590px;top:461px;width:966px;height:37px;background:linear-gradient(#ffffff,#f6f6f6 40%,#e8e8e8)"></div>
<div class="b" style="left:591px;top:498px;width:21px;height:117px;background:linear-gradient(#f6f6f6,#e6e6e6)"></div>
<div class="b" style="left:591px;top:498px;width:21px;height:20px;background:linear-gradient(135deg,#fbfbfb,#e4e4e4)"></div>
<div class="b" style="left:591px;top:517px;width:21px;height:1px;background:#d8d8d8"></div>
<div class="b" style="left:591px;top:518px;width:21px;height:20px;background:linear-gradient(135deg,#fbfbfb,#e4e4e4)"></div>
<div class="b" style="left:591px;top:537px;width:21px;height:1px;background:#d8d8d8"></div>
<div class="b" style="left:591px;top:538px;width:21px;height:20px;background:linear-gradient(135deg,#fbfbfb,#e4e4e4)"></div>
<div class="b" style="left:591px;top:557px;width:21px;height:1px;background:#d8d8d8"></div>
<div class="b" style="left:591px;top:558px;width:21px;height:20px;background:linear-gradient(135deg,#fbfbfb,#e4e4e4)"></div>
<div class="b" style="left:591px;top:577px;width:21px;height:1px;background:#d8d8d8"></div>
<div class="b" style="left:591px;top:578px;width:21px;height:20px;background:linear-gradient(135deg,#fbfbfb,#e4e4e4)"></div>
<div class="b" style="left:591px;top:597px;width:21px;height:1px;background:#d8d8d8"></div>
<div class="b" style="left:590px;top:497px;width:966px;height:1px;background:#d4d4d4"></div>
<div class="b" style="left:612px;top:461px;width:1px;height:154px;background:#d4d4d4"></div>
<div class="b" style="left:676px;top:461px;width:1px;height:137px;background:#d4d4d4"></div>
<div class="b" style="left:781px;top:461px;width:1px;height:37px;background:linear-gradient(#fafafa,#d8d8d8 60%,#d0d0d0)"></div>
<div class="b" style="left:820px;top:461px;width:1px;height:37px;background:linear-gradient(#fafafa,#d8d8d8 60%,#d0d0d0)"></div>
<div class="b" style="left:859px;top:461px;width:1px;height:37px;background:linear-gradient(#fafafa,#d8d8d8 60%,#d0d0d0)"></div>
<div class="b" style="left:896px;top:461px;width:1px;height:37px;background:linear-gradient(#fafafa,#d8d8d8 60%,#d0d0d0)"></div>
<div class="b" style="left:928px;top:461px;width:1px;height:37px;background:linear-gradient(#fafafa,#d8d8d8 60%,#d0d0d0)"></div>
<div class="b" style="left:967px;top:461px;width:1px;height:37px;background:linear-gradient(#fafafa,#d8d8d8 60%,#d0d0d0)"></div>
<div class="b" style="left:1006px;top:461px;width:1px;height:37px;background:linear-gradient(#fafafa,#d8d8d8 60%,#d0d0d0)"></div>
<div class="b" style="left:1045px;top:461px;width:1px;height:37px;background:linear-gradient(#fafafa,#d8d8d8 60%,#d0d0d0)"></div>
<div class="b" style="left:1084px;top:461px;width:1px;height:37px;background:linear-gradient(#fafafa,#d8d8d8 60%,#d0d0d0)"></div>
<div class="b" style="left:1123px;top:461px;width:1px;height:37px;background:linear-gradient(#fafafa,#d8d8d8 60%,#d0d0d0)"></div>
<div class="b" style="left:1162px;top:461px;width:1px;height:37px;background:linear-gradient(#fafafa,#d8d8d8 60%,#d0d0d0)"></div>
<div class="b" style="left:1201px;top:461px;width:1px;height:37px;background:linear-gradient(#fafafa,#d8d8d8 60%,#d0d0d0)"></div>
<div class="b" style="left:1240px;top:461px;width:1px;height:37px;background:linear-gradient(#fafafa,#d8d8d8 60%,#d0d0d0)"></div>
<div class="b" style="left:1279px;top:461px;width:1px;height:37px;background:linear-gradient(#fafafa,#d8d8d8 60%,#d0d0d0)"></div>
<div class="b" style="left:1318px;top:461px;width:1px;height:37px;background:linear-gradient(#fafafa,#d8d8d8 60%,#d0d0d0)"></div>
<div class="b" style="left:1357px;top:461px;width:1px;height:37px;background:linear-gradient(#fafafa,#d8d8d8 60%,#d0d0d0)"></div>
<div class="b" style="left:1396px;top:461px;width:1px;height:37px;background:linear-gradient(#fafafa,#d8d8d8 60%,#d0d0d0)"></div>
<div class="b" style="left:1435px;top:461px;width:1px;height:37px;background:linear-gradient(#fafafa,#d8d8d8 60%,#d0d0d0)"></div>
<div class="b" style="left:1474px;top:461px;width:1px;height:37px;background:linear-gradient(#fafafa,#d8d8d8 60%,#d0d0d0)"></div>
<div class="b" style="left:1513px;top:461px;width:1px;height:37px;background:linear-gradient(#fafafa,#d8d8d8 60%,#d0d0d0)"></div>
<div class="b" style="left:1552px;top:461px;width:1px;height:37px;background:linear-gradient(#fafafa,#d8d8d8 60%,#d0d0d0)"></div>
<svg style="left:598px;top:478px" width="8" height="5" viewBox="0 0 8 5"><path d="M0 5H8L4.0 0Z" fill="#000"/></svg>
<div class="t " style="left:615px;top:467px;letter-spacing:-0.1px;">Team</div>
<div class="t " style="left:615px;top:482px;letter-spacing:-0.1px;">Member</div>
<div class="t " style="left:679px;top:467px;letter-spacing:-0.1px;">Employee Name</div>
<div class="t " style="left:784px;top:467px;letter-spacing:-0.1px;">Tue</div>
<div class="t " style="left:823px;top:467px;letter-spacing:-0.1px;">Wed</div>
<div class="t " style="left:862px;top:467px;letter-spacing:-0.1px;">Thu</div>
<div class="t " style="left:899px;top:467px;letter-spacing:-0.1px;">Fri</div>
<div class="t " style="left:931px;top:467px;letter-spacing:-0.1px;">Sat</div>
<div class="t " style="left:970px;top:467px;letter-spacing:-0.1px;">Sun</div>
<div class="t " style="left:1009px;top:467px;letter-spacing:-0.1px;">Mon</div>
<div class="t " style="left:1048px;top:467px;letter-spacing:-0.1px;">Tue</div>
<div class="t " style="left:1087px;top:467px;letter-spacing:-0.1px;">Wed</div>
<div class="t " style="left:1126px;top:467px;letter-spacing:-0.1px;">Thu</div>
<div class="t " style="left:1165px;top:467px;letter-spacing:-0.1px;">Fri</div>
<div class="t " style="left:1204px;top:467px;letter-spacing:-0.1px;">Sat</div>
<div class="t " style="left:1243px;top:467px;letter-spacing:-0.1px;">Sun</div>
<div class="t " style="left:1282px;top:467px;letter-spacing:-0.1px;">Mon</div>
<div class="t " style="left:1321px;top:467px;letter-spacing:-0.1px;">Tue</div>
<div class="t " style="left:1360px;top:467px;letter-spacing:-0.1px;">Wed</div>
<div class="t " style="left:1399px;top:467px;letter-spacing:-0.1px;">Thu</div>
<div class="t " style="left:1438px;top:467px;letter-spacing:-0.1px;">Fri</div>
<div class="t " style="left:1477px;top:467px;letter-spacing:-0.1px;">Sat</div>
<div class="t " style="left:1516px;top:467px;letter-spacing:-0.1px;">Sun</div>
<div class="t " style="left:1555px;top:467px;letter-spacing:-0.1px;color:#e0e070">Mon</div>
<div class="b" style="left:612px;top:498px;width:169px;height:20px;background:#dcdcdc"></div>
<div class="b" style="left:612px;top:498px;width:169px;height:1px;background:#d2d2d2"></div>
<div class="b" style="left:676px;top:498px;width:1px;height:20px;background:#d0d0d0"></div>
<div class="t " style="left:597px;top:501px;letter-spacing:-0.1px;">1</div>
<div class="t " style="left:615px;top:502px;letter-spacing:-0.1px;">1000</div>
<div class="t " style="left:680px;top:502px;letter-spacing:-0.1px;">Bobby Jones</div>
<div class="b" style="left:781px;top:498px;width:39px;height:20px;background:#94b4dc;border-left:1px solid #7ba0d0;border-top:1px solid #84a6d2"></div>
<div class="t" style="left:781px;width:39px;text-align:center;top:502px">1</div>
<div class="b" style="left:820px;top:498px;width:39px;height:20px;background:#94b4dc;border-left:1px solid #7ba0d0;border-top:1px solid #84a6d2"></div>
<div class="t" style="left:820px;width:39px;text-align:center;top:502px">2</div>
<div class="b" style="left:859px;top:498px;width:37px;height:20px;background:#94b4dc;border-left:1px solid #7ba0d0;border-top:1px solid #84a6d2"></div>
<div class="t" style="left:859px;width:37px;text-align:center;top:502px">3</div>
<div class="b" style="left:896px;top:498px;width:32px;height:20px;background:#94b4dc;border-left:1px solid #7ba0d0;border-top:1px solid #84a6d2"></div>
<div class="t" style="left:896px;width:32px;text-align:center;top:502px">4</div>
<div class="b" style="left:928px;top:498px;width:39px;height:20px;background:#7ca4dc;border-left:1px solid #7ba0d0;border-top:1px solid #84a6d2"></div>
<div class="t" style="left:928px;width:39px;text-align:center;top:502px">5</div>
<div class="b" style="left:967px;top:498px;width:39px;height:20px;background:#7ca4dc;border-left:1px solid #7ba0d0;border-top:1px solid #84a6d2"></div>
<div class="t" style="left:967px;width:39px;text-align:center;top:502px">6</div>
<div class="b" style="left:1006px;top:498px;width:39px;height:20px;background:#94b4dc;border-left:1px solid #7ba0d0;border-top:1px solid #84a6d2"></div>
<div class="t" style="left:1006px;width:39px;text-align:center;top:502px">7</div>
<div class="b" style="left:1045px;top:498px;width:39px;height:20px;background:#94b4dc;border-left:1px solid #7ba0d0;border-top:1px solid #84a6d2"></div>
<div class="t" style="left:1045px;width:39px;text-align:center;top:502px">8</div>
<div class="b" style="left:1084px;top:498px;width:39px;height:20px;background:#94b4dc;border-left:1px solid #7ba0d0;border-top:1px solid #84a6d2"></div>
<div class="t" style="left:1084px;width:39px;text-align:center;top:502px">9</div>
<div class="b" style="left:1123px;top:498px;width:39px;height:20px;background:#94b4dc;border-left:1px solid #7ba0d0;border-top:1px solid #84a6d2"></div>
<div class="t" style="left:1123px;width:39px;text-align:center;top:502px">10</div>
<div class="b" style="left:1162px;top:498px;width:39px;height:20px;background:#94b4dc;border-left:1px solid #7ba0d0;border-top:1px solid #84a6d2"></div>
<div class="t" style="left:1162px;width:39px;text-align:center;top:502px">11</div>
<div class="b" style="left:1201px;top:498px;width:39px;height:20px;background:#7ca4dc;border-left:1px solid #7ba0d0;border-top:1px solid #84a6d2"></div>
<div class="t" style="left:1201px;width:39px;text-align:center;top:502px">12</div>
<div class="b" style="left:1240px;top:498px;width:39px;height:20px;background:#7ca4dc;border-left:1px solid #7ba0d0;border-top:1px solid #84a6d2"></div>
<div class="t" style="left:1240px;width:39px;text-align:center;top:502px">13</div>
<div class="b" style="left:1279px;top:498px;width:39px;height:20px;background:#94b4dc;border-left:1px solid #7ba0d0;border-top:1px solid #84a6d2"></div>
<div class="t" style="left:1279px;width:39px;text-align:center;top:502px">14</div>
<div class="b" style="left:1318px;top:498px;width:39px;height:20px;background:#94b4dc;border-left:1px solid #7ba0d0;border-top:1px solid #84a6d2"></div>
<div class="t" style="left:1318px;width:39px;text-align:center;top:502px">15</div>
<div class="b" style="left:1357px;top:498px;width:39px;height:20px;background:#94b4dc;border-left:1px solid #7ba0d0;border-top:1px solid #84a6d2"></div>
<div class="t" style="left:1357px;width:39px;text-align:center;top:502px">16</div>
<div class="b" style="left:1396px;top:498px;width:39px;height:20px;background:#94b4dc;border-left:1px solid #7ba0d0;border-top:1px solid #84a6d2"></div>
<div class="t" style="left:1396px;width:39px;text-align:center;top:502px">17</div>
<div class="b" style="left:1435px;top:498px;width:39px;height:20px;background:#94b4dc;border-left:1px solid #7ba0d0;border-top:1px solid #84a6d2"></div>
<div class="t" style="left:1435px;width:39px;text-align:center;top:502px">18</div>
<div class="b" style="left:1474px;top:498px;width:39px;height:20px;background:#7ca4dc;border-left:1px solid #7ba0d0;border-top:1px solid #84a6d2"></div>
<div class="t" style="left:1474px;width:39px;text-align:center;top:502px">19</div>
<div class="b" style="left:1513px;top:498px;width:39px;height:20px;background:#7ca4dc;border-left:1px solid #7ba0d0;border-top:1px solid #84a6d2"></div>
<div class="t" style="left:1513px;width:39px;text-align:center;top:502px">20</div>
<div class="b" style="left:1552px;top:498px;width:4px;height:20px;background:#d8dc2c;border-left:1px solid #7ba0d0;border-top:1px solid #84a6d2"></div>
<div class="b" style="left:612px;top:518px;width:169px;height:20px;background:#e6e6e6"></div>
<div class="b" style="left:612px;top:518px;width:169px;height:1px;background:#d2d2d2"></div>
<div class="b" style="left:676px;top:518px;width:1px;height:20px;background:#d0d0d0"></div>
<div class="t " style="left:597px;top:521px;letter-spacing:-0.1px;">2</div>
<div class="t " style="left:615px;top:522px;letter-spacing:-0.1px;">1001</div>
<div class="t " style="left:680px;top:522px;letter-spacing:-0.1px;">Sean Williams</div>
<div class="b" style="left:781px;top:518px;width:39px;height:20px;background:#86c63a;border-left:1px solid #7ba0d0;border-top:1px solid #84a6d2"></div>
<div class="t" style="left:781px;width:39px;text-align:center;top:522px">1</div>
<div class="b" style="left:820px;top:518px;width:39px;height:20px;background:#86c63a;border-left:1px solid #7ba0d0;border-top:1px solid #84a6d2"></div>
<div class="t" style="left:820px;width:39px;text-align:center;top:522px">2</div>
<div class="b" style="left:859px;top:518px;width:37px;height:20px;background:#86c63a;border-left:1px solid #7ba0d0;border-top:1px solid #84a6d2"></div>
<div class="t" style="left:859px;width:37px;text-align:center;top:522px">3</div>
<div class="b" style="left:896px;top:518px;width:32px;height:20px;background:#a0bee6;border-left:1px solid #7ba0d0;border-top:1px solid #84a6d2"></div>
<div class="t" style="left:896px;width:32px;text-align:center;top:522px">4</div>
<div class="b" style="left:928px;top:518px;width:39px;height:20px;background:#80aae6;border-left:1px solid #7ba0d0;border-top:1px solid #84a6d2"></div>
<div class="t" style="left:928px;width:39px;text-align:center;top:522px">5</div>
<div class="b" style="left:967px;top:518px;width:39px;height:20px;background:#80aae6;border-left:1px solid #7ba0d0;border-top:1px solid #84a6d2"></div>
<div class="t" style="left:967px;width:39px;text-align:center;top:522px">6</div>
<div class="b" style="left:1006px;top:518px;width:39px;height:20px;background:#a0bee6;border-left:1px solid #7ba0d0;border-top:1px solid #84a6d2"></div>
<div class="t" style="left:1006px;width:39px;text-align:center;top:522px">7</div>
<div class="b" style="left:1045px;top:518px;width:39px;height:20px;background:#d88676;border-left:1px solid #7ba0d0;border-top:1px solid #84a6d2"></div>
<div class="t" style="left:1045px;width:39px;text-align:center;top:522px">8</div>
<div class="b" style="left:1084px;top:518px;width:39px;height:20px;background:#a0bee6;border-left:1px solid #7ba0d0;border-top:1px solid #84a6d2"></div>
<div class="t" style="left:1084px;width:39px;text-align:center;top:522px">9</div>
<div class="b" style="left:1123px;top:518px;width:39px;height:20px;background:#a0bee6;border-left:1px solid #7ba0d0;border-top:1px solid #84a6d2"></div>
<div class="t" style="left:1123px;width:39px;text-align:center;top:522px">10</div>
<div class="b" style="left:1162px;top:518px;width:39px;height:20px;background:#a0bee6;border-left:1px solid #7ba0d0;border-top:1px solid #84a6d2"></div>
<div class="t" style="left:1162px;width:39px;text-align:center;top:522px">11</div>
<div class="b" style="left:1201px;top:518px;width:39px;height:20px;background:#80aae6;border-left:1px solid #7ba0d0;border-top:1px solid #84a6d2"></div>
<div class="t" style="left:1201px;width:39px;text-align:center;top:522px">12</div>
<div class="b" style="left:1240px;top:518px;width:39px;height:20px;background:#80aae6;border-left:1px solid #7ba0d0;border-top:1px solid #84a6d2"></div>
<div class="t" style="left:1240px;width:39px;text-align:center;top:522px">13</div>
<div class="b" style="left:1279px;top:518px;width:39px;height:20px;background:#a0bee6;border-left:1px solid #7ba0d0;border-top:1px solid #84a6d2"></div>
<div class="t" style="left:1279px;width:39px;text-align:center;top:522px">14</div>
<div class="b" style="left:1318px;top:518px;width:39px;height:20px;background:#a0bee6;border-left:1px solid #7ba0d0;border-top:1px solid #84a6d2"></div>
<div class="t" style="left:1318px;width:39px;text-align:center;top:522px">15</div>
<div class="b" style="left:1357px;top:518px;width:39px;height:20px;background:#d8dc2c;border-left:1px solid #7ba0d0;border-top:1px solid #84a6d2"></div>
<div class="t" style="left:1357px;width:39px;text-align:center;top:522px">16</div>
<div class="b" style="left:1396px;top:518px;width:39px;height:20px;background:#d8dc2c;border-left:1px solid #7ba0d0;border-top:1px solid #84a6d2"></div>
<div class="t" style="left:1396px;width:39px;text-align:center;top:522px">17</div>
<div class="b" style="left:1435px;top:518px;width:39px;height:20px;background:#a0bee6;border-left:1px solid #7ba0d0;border-top:1px solid #84a6d2"></div>
<div class="t" style="left:1435px;width:39px;text-align:center;top:522px">18</div>
<div class="b" style="left:1474px;top:518px;width:39px;height:20px;background:#80aae6;border-left:1px solid #7ba0d0;border-top:1px solid #84a6d2"></div>
<div class="t" style="left:1474px;width:39px;text-align:center;top:522px">19</div>
<div class="b" style="left:1513px;top:518px;width:39px;height:20px;background:#80aae6;border-left:1px solid #7ba0d0;border-top:1px solid #84a6d2"></div>
<div class="t" style="left:1513px;width:39px;text-align:center;top:522px">20</div>
<div class="b" style="left:1552px;top:518px;width:4px;height:20px;background:#a0bee6;border-left:1px solid #7ba0d0;border-top:1px solid #84a6d2"></div>
<div class="b" style="left:612px;top:538px;width:169px;height:20px;background:#e6e6e6"></div>
<div class="b" style="left:612px;top:538px;width:169px;height:1px;background:#d2d2d2"></div>
<div class="b" style="left:676px;top:538px;width:1px;height:20px;background:#d0d0d0"></div>
<div class="t " style="left:597px;top:541px;letter-spacing:-0.1px;">3</div>
<div class="t " style="left:615px;top:542px;letter-spacing:-0.1px;">1002</div>
<div class="t " style="left:680px;top:542px;letter-spacing:-0.1px;">Art Rivers</div>
<div class="b" style="left:781px;top:538px;width:39px;height:20px;background:#a0bee6;border-left:1px solid #7ba0d0;border-top:1px solid #84a6d2"></div>
<div class="t" style="left:781px;width:39px;text-align:center;top:542px">1</div>
<div class="b" style="left:820px;top:538px;width:39px;height:20px;background:#a0bee6;border-left:1px solid #7ba0d0;border-top:1px solid #84a6d2"></div>
<div class="t" style="left:820px;width:39px;text-align:center;top:542px">2</div>
<div class="b" style="left:859px;top:538px;width:37px;height:20px;background:#a0bee6;border-left:1px solid #7ba0d0;border-top:1px solid #84a6d2"></div>
<div class="t" style="left:859px;width:37px;text-align:center;top:542px">3</div>
<div class="b" style="left:896px;top:538px;width:32px;height:20px;background:#a0bee6;border-left:1px solid #7ba0d0;border-top:1px solid #84a6d2"></div>
<div class="t" style="left:896px;width:32px;text-align:center;top:542px">4</div>
<div class="b" style="left:928px;top:538px;width:39px;height:20px;background:#80aae6;border-left:1px solid #7ba0d0;border-top:1px solid #84a6d2"></div>
<div class="t" style="left:928px;width:39px;text-align:center;top:542px">5</div>
<div class="b" style="left:967px;top:538px;width:39px;height:20px;background:#80aae6;border-left:1px solid #7ba0d0;border-top:1px solid #84a6d2"></div>
<div class="t" style="left:967px;width:39px;text-align:center;top:542px">6</div>
<div class="b" style="left:1006px;top:538px;width:39px;height:20px;background:#a0bee6;border-left:1px solid #7ba0d0;border-top:1px solid #84a6d2"></div>
<div class="t" style="left:1006px;width:39px;text-align:center;top:542px">7</div>
<div class="b" style="left:1045px;top:538px;width:39px;height:20px;background:#a0bee6;border-left:1px solid #7ba0d0;border-top:1px solid #84a6d2"></div>
<div class="t" style="left:1045px;width:39px;text-align:center;top:542px">8</div>
<div class="b" style="left:1084px;top:538px;width:39px;height:20px;background:#a0bee6;border-left:1px solid #7ba0d0;border-top:1px solid #84a6d2"></div>
<div class="t" style="left:1084px;width:39px;text-align:center;top:542px">9</div>
<div class="b" style="left:1123px;top:538px;width:39px;height:20px;background:#a0bee6;border-left:1px solid #7ba0d0;border-top:1px solid #84a6d2"></div>
<div class="t" style="left:1123px;width:39px;text-align:center;top:542px">10</div>
<div class="b" style="left:1162px;top:538px;width:39px;height:20px;background:#a0bee6;border-left:1px solid #7ba0d0;border-top:1px solid #84a6d2"></div>
<div class="t" style="left:1162px;width:39px;text-align:center;top:542px">11</div>
<div class="b" style="left:1201px;top:538px;width:39px;height:20px;background:#80aae6;border-left:1px solid #7ba0d0;border-top:1px solid #84a6d2"></div>
<div class="t" style="left:1201px;width:39px;text-align:center;top:542px">12</div>
<div class="b" style="left:1240px;top:538px;width:39px;height:20px;background:#80aae6;border-left:1px solid #7ba0d0;border-top:1px solid #84a6d2"></div>
<div class="t" style="left:1240px;width:39px;text-align:center;top:542px">13</div>
<div class="b" style="left:1279px;top:538px;width:39px;height:20px;background:#a0bee6;border-left:1px solid #7ba0d0;border-top:1px solid #84a6d2"></div>
<div class="t" style="left:1279px;width:39px;text-align:center;top:542px">14</div>
<div class="b" style="left:1318px;top:538px;width:39px;height:20px;background:#a0bee6;border-left:1px solid #7ba0d0;border-top:1px solid #84a6d2"></div>
<div class="t" style="left:1318px;width:39px;text-align:center;top:542px">15</div>
<div class="b" style="left:1357px;top:538px;width:39px;height:20px;background:#a0bee6;border-left:1px solid #7ba0d0;border-top:1px solid #84a6d2"></div>
<div class="t" style="left:1357px;width:39px;text-align:center;top:542px">16</div>
<div class="b" style="left:1396px;top:538px;width:39px;height:20px;background:#a0bee6;border-left:1px solid #7ba0d0;border-top:1px solid #84a6d2"></div>
<div class="t" style="left:1396px;width:39px;text-align:center;top:542px">17</div>
<div class="b" style="left:1435px;top:538px;width:39px;height:20px;background:#a0bee6;border-left:1px solid #7ba0d0;border-top:1px solid #84a6d2"></div>
<div class="t" style="left:1435px;width:39px;text-align:center;top:542px">18</div>
<div class="b" style="left:1474px;top:538px;width:39px;height:20px;background:#80aae6;border-left:1px solid #7ba0d0;border-top:1px solid #84a6d2"></div>
<div class="t" style="left:1474px;width:39px;text-align:center;top:542px">19</div>
<div class="b" style="left:1513px;top:538px;width:39px;height:20px;background:#80aae6;border-left:1px solid #7ba0d0;border-top:1px solid #84a6d2"></div>
<div class="t" style="left:1513px;width:39px;text-align:center;top:542px">20</div>
<div class="b" style="left:1552px;top:538px;width:4px;height:20px;background:#a0bee6;border-left:1px solid #7ba0d0;border-top:1px solid #84a6d2"></div>
<div class="b" style="left:612px;top:558px;width:169px;height:20px;background:#e6e6e6"></div>
<div class="b" style="left:612px;top:558px;width:169px;height:1px;background:#d2d2d2"></div>
<div class="b" style="left:676px;top:558px;width:1px;height:20px;background:#d0d0d0"></div>
<div class="t " style="left:597px;top:561px;letter-spacing:-0.1px;">4</div>
<div class="t " style="left:615px;top:562px;letter-spacing:-0.1px;">1003</div>
<div class="t " style="left:680px;top:562px;letter-spacing:-0.1px;">Annie Leonard</div>
<div class="b" style="left:781px;top:558px;width:39px;height:20px;background:#a0bee6;border-left:1px solid #7ba0d0;border-top:1px solid #84a6d2"></div>
<div class="t" style="left:781px;width:39px;text-align:center;top:562px">1</div>
<div class="b" style="left:820px;top:558px;width:39px;height:20px;background:#a0bee6;border-left:1px solid #7ba0d0;border-top:1px solid #84a6d2"></div>
<div class="t" style="left:820px;width:39px;text-align:center;top:562px">2</div>
<div class="b" style="left:859px;top:558px;width:37px;height:20px;background:#a0bee6;border-left:1px solid #7ba0d0;border-top:1px solid #84a6d2"></div>
<div class="t" style="left:859px;width:37px;text-align:center;top:562px">3</div>
<div class="b" style="left:896px;top:558px;width:32px;height:20px;background:#a0bee6;border-left:1px solid #7ba0d0;border-top:1px solid #84a6d2"></div>
<div class="t" style="left:896px;width:32px;text-align:center;top:562px">4</div>
<div class="b" style="left:928px;top:558px;width:39px;height:20px;background:#80aae6;border-left:1px solid #7ba0d0;border-top:1px solid #84a6d2"></div>
<div class="t" style="left:928px;width:39px;text-align:center;top:562px">5</div>
<div class="b" style="left:967px;top:558px;width:39px;height:20px;background:#80aae6;border-left:1px solid #7ba0d0;border-top:1px solid #84a6d2"></div>
<div class="t" style="left:967px;width:39px;text-align:center;top:562px">6</div>
<div class="b" style="left:1006px;top:558px;width:39px;height:20px;background:#a0bee6;border-left:1px solid #7ba0d0;border-top:1px solid #84a6d2"></div>
<div class="t" style="left:1006px;width:39px;text-align:center;top:562px">7</div>
<div class="b" style="left:1045px;top:558px;width:39px;height:20px;background:#a0bee6;border-left:1px solid #7ba0d0;border-top:1px solid #84a6d2"></div>
<div class="t" style="left:1045px;width:39px;text-align:center;top:562px">8</div>
<div class="b" style="left:1084px;top:558px;width:39px;height:20px;background:#a0bee6;border-left:1px solid #7ba0d0;border-top:1px solid #84a6d2"></div>
<div class="t" style="left:1084px;width:39px;text-align:center;top:562px">9</div>
<div class="b" style="left:1123px;top:558px;width:39px;height:20px;background:#a0bee6;border-left:1px solid #7ba0d0;border-top:1px solid #84a6d2"></div>
<div class="t" style="left:1123px;width:39px;text-align:center;top:562px">10</div>
<div class="b" style="left:1162px;top:558px;width:39px;height:20px;background:#a0bee6;border-left:1px solid #7ba0d0;border-top:1px solid #84a6d2"></div>
<div class="t" style="left:1162px;width:39px;text-align:center;top:562px">11</div>
<div class="b" style="left:1201px;top:558px;width:39px;height:20px;background:#80aae6;border-left:1px solid #7ba0d0;border-top:1px solid #84a6d2"></div>
<div class="t" style="left:1201px;width:39px;text-align:center;top:562px">12</div>
<div class="b" style="left:1240px;top:558px;width:39px;height:20px;background:#80aae6;border-left:1px solid #7ba0d0;border-top:1px solid #84a6d2"></div>
<div class="t" style="left:1240px;width:39px;text-align:center;top:562px">13</div>
<div class="b" style="left:1279px;top:558px;width:39px;height:20px;background:#a0bee6;border-left:1px solid #7ba0d0;border-top:1px solid #84a6d2"></div>
<div class="t" style="left:1279px;width:39px;text-align:center;top:562px">14</div>
<div class="b" style="left:1318px;top:558px;width:39px;height:20px;background:#a0bee6;border-left:1px solid #7ba0d0;border-top:1px solid #84a6d2"></div>
<div class="t" style="left:1318px;width:39px;text-align:center;top:562px">15</div>
<div class="b" style="left:1357px;top:558px;width:39px;height:20px;background:#a0bee6;border-left:1px solid #7ba0d0;border-top:1px solid #84a6d2"></div>
<div class="t" style="left:1357px;width:39px;text-align:center;top:562px">16</div>
<div class="b" style="left:1396px;top:558px;width:39px;height:20px;background:#a0bee6;border-left:1px solid #7ba0d0;border-top:1px solid #84a6d2"></div>
<div class="t" style="left:1396px;width:39px;text-align:center;top:562px">17</div>
<div class="b" style="left:1435px;top:558px;width:39px;height:20px;background:#a0bee6;border-left:1px solid #7ba0d0;border-top:1px solid #84a6d2"></div>
<div class="t" style="left:1435px;width:39px;text-align:center;top:562px">18</div>
<div class="b" style="left:1474px;top:558px;width:39px;height:20px;background:#80aae6;border-left:1px solid #7ba0d0;border-top:1px solid #84a6d2"></div>
<div class="t" style="left:1474px;width:39px;text-align:center;top:562px">19</div>
<div class="b" style="left:1513px;top:558px;width:39px;height:20px;background:#80aae6;border-left:1px solid #7ba0d0;border-top:1px solid #84a6d2"></div>
<div class="t" style="left:1513px;width:39px;text-align:center;top:562px">20</div>
<div class="b" style="left:1552px;top:558px;width:4px;height:20px;background:#a0bee6;border-left:1px solid #7ba0d0;border-top:1px solid #84a6d2"></div>
<div class="b" style="left:612px;top:578px;width:169px;height:20px;background:#e6e6e6"></div>
<div class="b" style="left:612px;top:578px;width:169px;height:1px;background:#d2d2d2"></div>
<div class="b" style="left:676px;top:578px;width:1px;height:20px;background:#d0d0d0"></div>
<div class="t " style="left:597px;top:581px;letter-spacing:-0.1px;">5</div>
<div class="t " style="left:615px;top:582px;letter-spacing:-0.1px;">1004</div>
<div class="t " style="left:680px;top:582px;letter-spacing:-0.1px;">Fay Miller</div>
<div class="b" style="left:781px;top:578px;width:39px;height:20px;background:#a0bee6;border-left:1px solid #7ba0d0;border-top:1px solid #84a6d2"></div>
<div class="t" style="left:781px;width:39px;text-align:center;top:582px">1</div>
<div class="b" style="left:820px;top:578px;width:39px;height:20px;background:#a0bee6;border-left:1px solid #7ba0d0;border-top:1px solid #84a6d2"></div>
<div class="t" style="left:820px;width:39px;text-align:center;top:582px">2</div>
<div class="b" style="left:859px;top:578px;width:37px;height:20px;background:#a0bee6;border-left:1px solid #7ba0d0;border-top:1px solid #84a6d2"></div>
<div class="t" style="left:859px;width:37px;text-align:center;top:582px">3</div>
<div class="b" style="left:896px;top:578px;width:32px;height:20px;background:#a0bee6;border-left:1px solid #7ba0d0;border-top:1px solid #84a6d2"></div>
<div class="t" style="left:896px;width:32px;text-align:center;top:582px">4</div>
<div class="b" style="left:928px;top:578px;width:39px;height:20px;background:#80aae6;border-left:1px solid #7ba0d0;border-top:1px solid #84a6d2"></div>
<div class="t" style="left:928px;width:39px;text-align:center;top:582px">5</div>
<div class="b" style="left:967px;top:578px;width:39px;height:20px;background:#80aae6;border-left:1px solid #7ba0d0;border-top:1px solid #84a6d2"></div>
<div class="t" style="left:967px;width:39px;text-align:center;top:582px">6</div>
<div class="b" style="left:1006px;top:578px;width:39px;height:20px;background:#a0bee6;border-left:1px solid #7ba0d0;border-top:1px solid #84a6d2"></div>
<div class="t" style="left:1006px;width:39px;text-align:center;top:582px">7</div>
<div class="b" style="left:1045px;top:578px;width:39px;height:20px;background:#a0bee6;border-left:1px solid #7ba0d0;border-top:1px solid #84a6d2"></div>
<div class="t" style="left:1045px;width:39px;text-align:center;top:582px">8</div>
<div class="b" style="left:1084px;top:578px;width:39px;height:20px;background:#a0bee6;border-left:1px solid #7ba0d0;border-top:1px solid #84a6d2"></div>
<div class="t" style="left:1084px;width:39px;text-align:center;top:582px">9</div>
<div class="b" style="left:1123px;top:578px;width:39px;height:20px;background:#a0bee6;border-left:1px solid #7ba0d0;border-top:1px solid #84a6d2"></div>
<div class="t" style="left:1123px;width:39px;text-align:center;top:582px">10</div>
<div class="b" style="left:1162px;top:578px;width:39px;height:20px;background:#a0bee6;border-left:1px solid #7ba0d0;border-top:1px solid #84a6d2"></div>
<div class="t" style="left:1162px;width:39px;text-align:center;top:582px">11</div>
<div class="b" style="left:1201px;top:578px;width:39px;height:20px;background:#80aae6;border-left:1px solid #7ba0d0;border-top:1px solid #84a6d2"></div>
<div class="t" style="left:1201px;width:39px;text-align:center;top:582px">12</div>
<div class="b" style="left:1240px;top:578px;width:39px;height:20px;background:#80aae6;border-left:1px solid #7ba0d0;border-top:1px solid #84a6d2"></div>
<div class="t" style="left:1240px;width:39px;text-align:center;top:582px">13</div>
<div class="b" style="left:1279px;top:578px;width:39px;height:20px;background:#a0bee6;border-left:1px solid #7ba0d0;border-top:1px solid #84a6d2"></div>
<div class="t" style="left:1279px;width:39px;text-align:center;top:582px">14</div>
<div class="b" style="left:1318px;top:578px;width:39px;height:20px;background:#a0bee6;border-left:1px solid #7ba0d0;border-top:1px solid #84a6d2"></div>
<div class="t" style="left:1318px;width:39px;text-align:center;top:582px">15</div>
<div class="b" style="left:1357px;top:578px;width:39px;height:20px;background:#a0bee6;border-left:1px solid #7ba0d0;border-top:1px solid #84a6d2"></div>
<div class="t" style="left:1357px;width:39px;text-align:center;top:582px">16</div>
<div class="b" style="left:1396px;top:578px;width:39px;height:20px;background:#a0bee6;border-left:1px solid #7ba0d0;border-top:1px solid #84a6d2"></div>
<div class="t" style="left:1396px;width:39px;text-align:center;top:582px">17</div>
<div class="b" style="left:1435px;top:578px;width:39px;height:20px;background:#a0bee6;border-left:1px solid #7ba0d0;border-top:1px solid #84a6d2"></div>
<div class="t" style="left:1435px;width:39px;text-align:center;top:582px">18</div>
<div class="b" style="left:1474px;top:578px;width:39px;height:20px;background:#80aae6;border-left:1px solid #7ba0d0;border-top:1px solid #84a6d2"></div>
<div class="t" style="left:1474px;width:39px;text-align:center;top:582px">19</div>
<div class="b" style="left:1513px;top:578px;width:39px;height:20px;background:#80aae6;border-left:1px solid #7ba0d0;border-top:1px solid #84a6d2"></div>
<div class="t" style="left:1513px;width:39px;text-align:center;top:582px">20</div>
<div class="b" style="left:1552px;top:578px;width:4px;height:20px;background:#a0bee6;border-left:1px solid #7ba0d0;border-top:1px solid #84a6d2"></div>
<div class="b" style="left:612px;top:498px;width:65px;height:20px;border:2px solid #b4b4b4"></div>
<div class="b" style="left:613px;top:599px;width:943px;height:16px;background:#fff"></div>
<div class="b" style="left:612px;top:598px;width:169px;height:1px;background:#c8c8c8"></div>
<div class="b" style="left:781px;top:598px;width:775px;height:1px;background:#8aa8d0"></div>
<div class="b" style="left:612px;top:461px;width:1px;height:154px;background:#c8c8c8"></div>
</body></html>
